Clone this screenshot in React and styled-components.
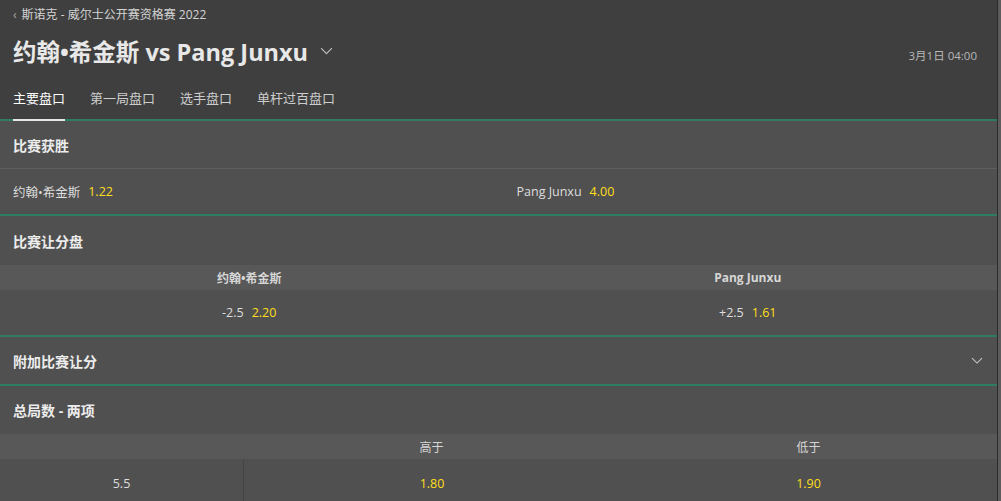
import React from "react";
import styled, { createGlobalStyle } from "styled-components";

const GlobalStyle = createGlobalStyle`
  html, body {
    margin: 0;
    padding: 0;
    background: #505050;
  }
  body {
    font-family: "Open Sans", "Noto Sans CJK SC", sans-serif;
    color: #e4e4e4;
  }
`;

const Chevron = ({ size = 12, color = "#bdbdbd" }) => (
  <svg width={size} height={size * 0.6} viewBox="0 0 12 7" fill="none">
    <path d="M1 1l5 5 5-5" stroke={color} strokeWidth="1.1" />
  </svg>
);

const Shell = styled.div`
  display: flex;
  width: 1001px;
  height: 501px;
  overflow: hidden;
`;

const Page = styled.div`
  width: 997px;
  border-right: 1px solid #2c2c2c;
`;

const Scroll = styled.div`
  width: 3px;
  background: #5c5c5c;
`;

const Header = styled.header`
  background: #3f3f3f;
  padding: 0 20px 0 13px;
  border-bottom: 2px solid #2e7d60;
`;

const Crumb = styled.div`
  display: flex;
  align-items: center;
  gap: 5px;
  height: 28px;
  font-size: 12px;
  color: #d4d4d4;
  span.arrow {
    font-size: 12px;
    color: #aaa;
  }
`;

const TitleRow = styled.div`
  display: flex;
  align-items: center;
  justify-content: space-between;
  height: 46px;
`;

const Title = styled.h1`
  margin: 0;
  display: flex;
  align-items: center;
  gap: 12px;
  font-size: 23.5px;
  font-weight: 700;
  color: #e8e8e8;
`;

const DateText = styled.div`
  font-size: 11.5px;
  color: #b8b8b8;
  padding-top: 8px;
`;

const Tabs = styled.nav`
  display: flex;
  gap: 25px;
  height: 45px;
  align-items: flex-end;
`;

const Tab = styled.div`
  font-size: 13px;
  color: ${(p) => (p.$active ? "#ffffff" : "#cdcdcd")};
  padding-bottom: 12px;
  margin-bottom: -2px;
  border-bottom: 2px solid ${(p) => (p.$active ? "#e6e6e6" : "transparent")};
`;

const Section = styled.section`
  border-bottom: 2px solid #2e7d60;
`;

const SectionHead = styled.div`
  display: flex;
  align-items: center;
  justify-content: space-between;
  height: ${(p) => p.$h || 46}px;
  padding: 0 14px 0 13px;
  font-size: 14px;
  font-weight: 700;
  color: #ececec;
  border-bottom: ${(p) => (p.$line ? "1px solid #5e5e5e" : "none")};
`;

const Grid = styled.div`
  display: grid;
  grid-template-columns: ${(p) => p.$cols};
`;

const ColHead = styled.div`
  background: #585858;
  height: 25px;
  display: flex;
  align-items: center;
  justify-content: center;
  font-size: 12px;
  font-weight: ${(p) => (p.$bold ? 700 : 400)};
  color: #d6d6d6;
`;

const Cell = styled.div`
  display: flex;
  align-items: center;
  justify-content: ${(p) => (p.$left ? "flex-start" : "center")};
  gap: 8px;
  height: ${(p) => p.$h || 45}px;
  padding: 0 13px;
  font-size: 12.5px;
  color: #dedede;
  border-left: ${(p) => (p.$divider ? "1px solid #444" : "none")};
`;

const Odds = styled.span`
  color: #ffdf1b;
`;

export default function App() {
  return (
    <>
      <GlobalStyle />
      <Shell>
        <Page>
          <Header>
            <Crumb>
              <span className="arrow">‹</span>
              <span>斯诺克 - 威尔士公开赛资格赛 2022</span>
            </Crumb>
            <TitleRow>
              <Title>
                约翰•希金斯 vs Pang Junxu
                <Chevron size={13} />
              </Title>
              <DateText>3月1日 04:00</DateText>
            </TitleRow>
            <Tabs>
              <Tab $active>主要盘口</Tab>
              <Tab>第一局盘口</Tab>
              <Tab>选手盘口</Tab>
              <Tab>单杆过百盘口</Tab>
            </Tabs>
          </Header>

          <Section>
            <SectionHead $line $h={47}>比赛获胜</SectionHead>
            <Grid $cols="1fr 1fr">
              <Cell $left>
                约翰•希金斯 <Odds>1.22</Odds>
              </Cell>
              <Cell $left style={{ paddingLeft: 18 }}>
                Pang Junxu <Odds>4.00</Odds>
              </Cell>
            </Grid>
          </Section>

          <Section>
            <SectionHead $h={49}>比赛让分盘</SectionHead>
            <Grid $cols="1fr 1fr">
              <ColHead $bold>约翰•希金斯</ColHead>
              <ColHead $bold>Pang Junxu</ColHead>
              <Cell>
                -2.5 <Odds>2.20</Odds>
              </Cell>
              <Cell>
                +2.5 <Odds>1.61</Odds>
              </Cell>
            </Grid>
          </Section>

          <Section>
            <SectionHead $h={47}>
              附加比赛让分
              <Chevron size={12} color="#c4c4c4" />
            </SectionHead>
          </Section>

          <section>
            <SectionHead $h={48}>总局数 - 两项</SectionHead>
            <Grid $cols="243px 1fr 1fr">
              <ColHead />
              <ColHead>高于</ColHead>
              <ColHead>低于</ColHead>
              <Cell $h={48}>5.5</Cell>
              <Cell $h={48} $divider>
                <Odds>1.80</Odds>
              </Cell>
              <Cell $h={48}>
                <Odds>1.90</Odds>
              </Cell>
            </Grid>
          </section>
        </Page>
        <Scroll />
      </Shell>
    </>
  );
}
